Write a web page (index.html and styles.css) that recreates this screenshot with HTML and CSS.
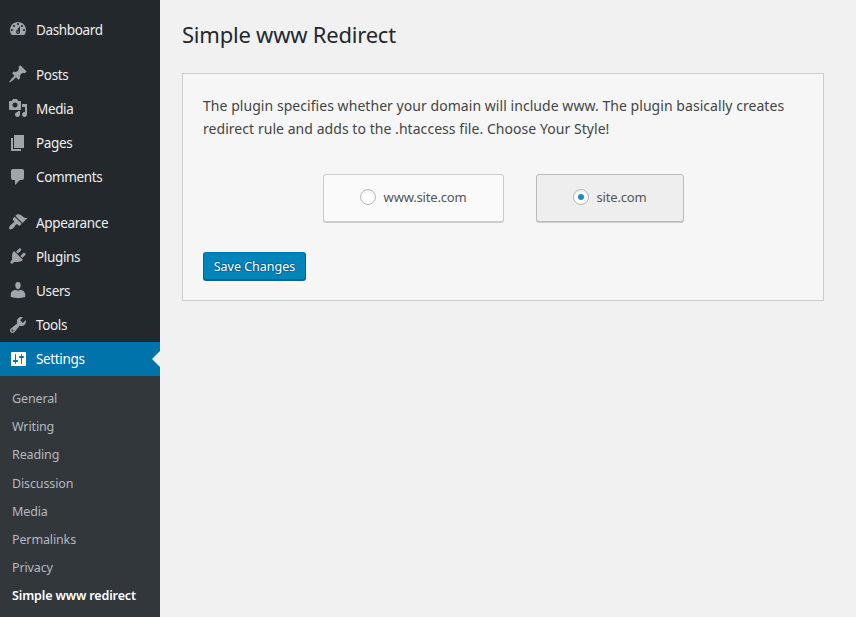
FILE: index.html
```html
<!DOCTYPE html>
<html lang="en">
<head>
<meta charset="utf-8">
<title>Simple www Redirect</title>
<link rel="stylesheet" href="styles.css">
</head>
<body>
<div class="admin">
  <nav class="sidebar">
    <ul class="menu">
      <li class="item"><svg class="icon up" viewBox="0 0 20 20"><path fill-rule="evenodd" d="M3.76 16h12.48c1.1-1.37 1.76-3.11 1.76-5 0-4.42-3.58-8-8-8s-8 3.58-8 8c0 1.89.66 3.63 1.76 5zM10 4c.55 0 1 .45 1 1s-.45 1-1 1-1-.45-1-1 .45-1 1-1zM6 6c.55 0 1 .45 1 1s-.45 1-1 1-1-.45-1-1 .45-1 1-1zm8 0c.55 0 1 .45 1 1s-.45 1-1 1-1-.45-1-1 .45-1 1-1zM8.63 11.55L12 7v6c0 1.1-.9 2-2 2s-2-.9-2-2c0-.57.24-1.08.63-1.45zM4 10c.55 0 1 .45 1 1s-.45 1-1 1-1-.45-1-1 .45-1 1-1zm12 0c.55 0 1 .45 1 1s-.45 1-1 1-1-.45-1-1 .45-1 1-1zm-5.2 3c0-.44-.36-.8-.8-.8s-.8.36-.8.8.36.8.8.8.8-.36.8-.8z"/></svg><span>Dashboard</span></li>
      <li class="item group"><svg class="icon up" viewBox="0 0 20 20"><path d="M10.44 3.02l1.82-1.82 6.36 6.35-1.83 1.82c-1.05-.68-2.48-.57-3.41.36l-.75.75c-.92.93-1.04 2.35-.35 3.41l-1.83 1.82-2.41-2.41-2.8 2.79c-.42.42-3.38 2.71-3.8 2.29s1.86-3.39 2.28-3.81l2.79-2.79L4.1 9.36l1.83-1.82c1.05.69 2.48.57 3.4-.36l.75-.75c.93-.92 1.05-2.35.36-3.41z"/></svg><span>Posts</span></li>
      <li class="item"><svg class="icon up" viewBox="0 0 20 20"><path d="M13 11V4c0-.55-.45-1-1-1h-1.67L9 1H5L3.67 3H2c-.55 0-1 .45-1 1v7c0 .55.45 1 1 1h10c.55 0 1-.45 1-1zM7 4.5c1.38 0 2.5 1.12 2.5 2.5S8.38 9.5 7 9.5 4.5 8.38 4.5 7 5.62 4.5 7 4.5zM14 6h5v10.5c0 1.38-1.12 2.5-2.5 2.5S14 17.88 14 16.5s1.12-2.5 2.5-2.5c.17 0 .34.02.5.05V9h-3V6zm-4 8.05V13h2v3.5c0 1.38-1.12 2.5-2.5 2.5S7 17.88 7 16.5 8.12 14 9.5 14c.17 0 .34.02.5.05z"/></svg><span>Media</span></li>
      <li class="item"><svg class="icon" viewBox="0 0 20 20"><path d="M6 15V2h10v13H6zm-1 1h8v2H3V5h2v11z"/></svg><span>Pages</span></li>
      <li class="item"><svg class="icon" viewBox="0 0 20 20"><path d="M5 2h9c1.1 0 2 .9 2 2v7c0 1.1-.9 2-2 2h-2l-5 5v-5H5c-1.1 0-2-.9-2-2V4c0-1.1.9-2 2-2z"/></svg><span>Comments</span></li>
      <li class="item group-wide"><svg class="icon up" viewBox="0 0 20 20"><path d="M14.48 11.06L7.41 3.99l1.5-1.5c.5-.56 2.3-.47 3.51.32 1.21.8 1.43 1.28 2.91 2.1 1.18.64 2.45 1.26 4.45.85zm-.71.71L6.7 4.7 4.93 6.47c-.39.39-.39 1.02 0 1.41l1.06 1.06c.39.39.39 1.03 0 1.42-.6.6-1.43 1.11-2.21 1.69-.35.26-.7.53-1.01.84C1.43 14.23.4 16.08 1.4 17.07c.99 1 2.84-.03 4.18-1.36.31-.31.58-.66.85-1.02.57-.78 1.08-1.61 1.69-2.21.39-.39 1.02-.39 1.41 0l1.06 1.06c.39.39 1.02.39 1.41 0z"/></svg><span>Appearance</span></li>
      <li class="item"><svg class="icon up" viewBox="0 0 20 20"><path d="M13.11 4.36L9.87 7.6 8 5.73l3.24-3.24c.35-.34 1.05-.2 1.56.32.52.51.66 1.21.31 1.55zm-8 1.77l.91-1.12 9.01 9.01-1.19.84c-.71.71-2.63 1.16-3.82 1.16H6.14L4.9 17.26c-.59.59-1.54.59-2.12 0-.59-.58-.59-1.53 0-2.12l1.24-1.24v-3.88c0-1.13.4-3.19 1.09-3.89zm7.26 3.97l3.24-3.24c.34-.35 1.04-.21 1.55.31.52.51.66 1.21.31 1.55l-3.24 3.25z"/></svg><span>Plugins</span></li>
      <li class="item"><svg class="icon up" viewBox="0 0 20 20"><path d="M10 9.25c-2.27 0-2.73-3.44-2.73-3.44C7 4.02 7.82 2 9.97 2c2.16 0 2.98 2.02 2.71 3.81 0 0-.41 3.44-2.68 3.44zm0 1.25L12.72 10c2.39 0 4.52 2.33 4.52 4.53v2.49s-3.65 1.13-7.24 1.13c-3.65 0-7.24-1.13-7.24-1.13v-2.49c0-2.25 1.94-4.48 4.47-4.48z"/></svg><span>Users</span></li>
      <li class="item"><svg class="icon" viewBox="0 0 20 20"><path d="M16.68 9.77c-1.34 1.34-3.3 1.67-4.95.99l-5.41 6.52c-.99.99-2.59.99-3.58 0s-.99-2.59 0-3.57l6.52-5.42c-.68-1.65-.35-3.61.99-4.95 1.28-1.28 3.12-1.62 4.72-1.06l-2.89 2.89 2.82 2.82 2.86-2.87c.53 1.58.18 3.39-1.08 4.65zM3.81 16.21c.4.39 1.04.39 1.43 0 .4-.4.4-1.04 0-1.43-.39-.4-1.03-.4-1.43 0-.39.39-.39 1.03 0 1.43z"/></svg><span>Tools</span></li>
      <li class="item current"><svg class="icon" viewBox="0 0 20 20"><path d="M18 16V4c0-.55-.45-1-1-1H4c-.55 0-1 .45-1 1v12c0 .55.45 1 1 1h13c.55 0 1-.45 1-1zM8 11h1c.55 0 1 .45 1 1s-.45 1-1 1H8v1.5c0 .28-.22.5-.5.5s-.5-.22-.5-.5V13H6c-.55 0-1-.45-1-1s.45-1 1-1h1V5.5c0-.28.22-.5.5-.5s.5.22.5.5V11zm5-2h-1c-.55 0-1-.45-1-1s.45-1 1-1h1V5.5c0-.28.22-.5.5-.5s.5.22.5.5V7h1c.55 0 1 .45 1 1s-.45 1-1 1h-1v5.5c0 .28-.22.5-.5.5s-.5-.22-.5-.5V9z"/></svg><span>Settings</span></li>
    </ul>
    <ul class="submenu">
      <li>General</li>
      <li>Writing</li>
      <li>Reading</li>
      <li>Discussion</li>
      <li>Media</li>
      <li>Permalinks</li>
      <li>Privacy</li>
      <li class="active">Simple www redirect</li>
    </ul>
  </nav>
  <main class="content">
    <h1>Simple www Redirect</h1>
    <form class="card">
      <p>The plugin specifies whether your domain will include www. The plugin basically creates<br>redirect rule and adds to the .htaccess file. Choose Your Style!</p>
      <div class="choices">
        <label class="choice"><input type="radio" name="style"><span>www.site.com</span></label>
        <label class="choice selected"><input type="radio" name="style" checked><span>site.com</span></label>
      </div>
      <button class="save" type="button">Save Changes</button>
    </form>
  </main>
</div>
</body>
</html>
```
FILE: styles.css
```css
* {
  box-sizing: border-box;
}

body {
  margin: 0;
  background: #f1f1f1;
  color: #444;
  font-family: "Segoe UI", "Noto Sans", "Open Sans", sans-serif;
  overflow: hidden;
}

.admin {
  display: flex;
  height: 617px;
}

.sidebar {
  display: flex;
  flex-direction: column;
  width: 160px;
  flex: none;
  background: #23282d;
}

.menu,
.submenu {
  list-style: none;
  margin: 0;
  padding: 0;
}

.menu {
  padding-top: 13px;
}

.item {
  position: relative;
  display: flex;
  gap: 8px;
  height: 34px;
  padding-left: 8px;
  color: #eee;
  font-size: 13.5px;
  line-height: 34px;
  letter-spacing: -0.35px;
}

.group {
  margin-top: 11px;
}

.group-wide {
  margin-top: 12px;
}

.icon {
  width: 20px;
  height: 20px;
  margin-top: 7px;
  fill: #a0a5aa;
}

.icon.up {
  margin-top: 6px;
}

.current {
  background: #0073aa;
  color: #fff;
}

.current .icon {
  fill: #fff;
}

.current::after {
  content: "";
  position: absolute;
  right: 0;
  top: 9px;
  border: 8px solid transparent;
  border-right-color: #f1f1f1;
  border-left: 0;
}

.submenu {
  flex: 1;
  padding: 9px 12px 0;
  background: #32373c;
  color: #b4b9be;
  font-size: 12.5px;
  line-height: 28.17px;
  letter-spacing: -0.13px;
  white-space: nowrap;
}

.active {
  color: #fff;
  font-weight: 600;
}

.content {
  flex: 1;
  padding: 19px 32px 0 22px;
}

h1 {
  margin: 0;
  color: #23282d;
  font-size: 22px;
  font-weight: 400;
  line-height: 30px;
  letter-spacing: -0.22px;
}

.card {
  height: 228px;
  margin-top: 24px;
  padding: 20px 20px 0;
  border: 1px solid #ccc;
  background: #f6f6f6;
}

.card p {
  margin: 0;
  font-size: 14px;
  line-height: 23px;
  letter-spacing: 0.05px;
  white-space: nowrap;
}

.choices {
  display: flex;
  justify-content: center;
  gap: 32px;
  margin-top: 34px;
}

.choice {
  display: flex;
  align-items: center;
  justify-content: center;
  gap: 8px;
  width: 181px;
  height: 48px;
  padding-bottom: 2px;
  border: 1px solid #ccc;
  border-radius: 3px;
  background: #fafafa;
  box-shadow: 0 1px 0 #ccc;
  color: #555;
  font-size: 13px;
  letter-spacing: -0.18px;
}

.choice.selected {
  width: 148px;
  border-color: #bbb;
  background: #eee;
}

input {
  appearance: none;
  display: grid;
  place-items: center;
  width: 16px;
  height: 16px;
  margin: 0;
  border: 1px solid #b4b9be;
  border-radius: 50%;
  background: #fff;
  box-shadow: inset 0 1px 2px rgba(0, 0, 0, 0.1);
}

input:checked::before {
  content: "";
  width: 6px;
  height: 6px;
  border-radius: 50%;
  background: #1e8cbe;
}

.save {
  display: block;
  width: 103px;
  height: 28px;
  margin-top: 30px;
  padding: 0;
  border: 1px solid #006799;
  border-color: #0073aa #006799 #006799;
  border-radius: 3px;
  background: #0085ba;
  box-shadow: 0 1px 0 #006799;
  color: #fff;
  font-family: inherit;
  font-size: 12.5px;
  line-height: 28px;
  text-shadow: 0 -1px 1px #006799, 1px 0 1px #006799, 0 1px 1px #006799, -1px 0 1px #006799;
}
```
